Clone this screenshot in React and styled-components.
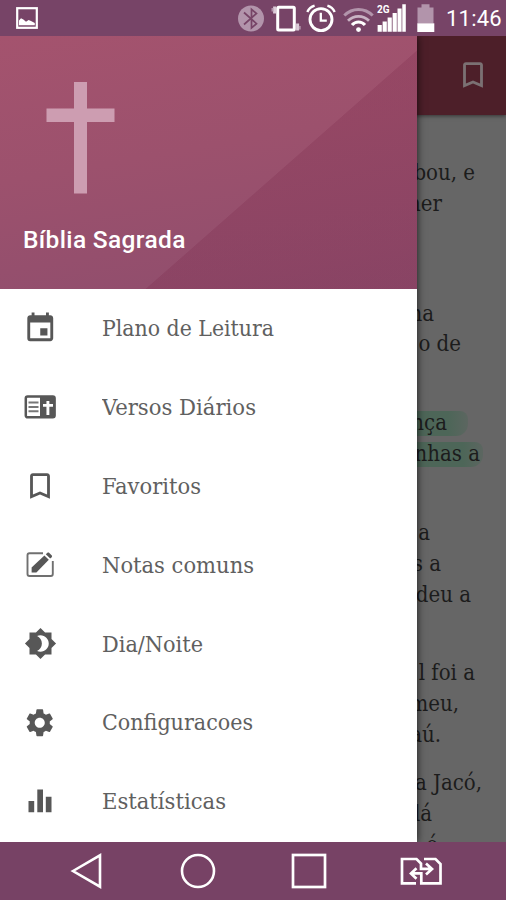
import React from 'react'
import styled, { createGlobalStyle } from 'styled-components'
import { MdBookmarkBorder, MdBrightness4, MdEvent, MdSettings } from 'react-icons/md'

const slab = `'Roboto Slab', 'DejaVu Serif Condensed', 'DejaVu Serif', serif`

const VersesIcon = () => (
  <svg width="34" height="34" viewBox="0 0 34 34">
    <rect x="2.8" y="6.5" width="28.8" height="20.8" rx="1.8" fill="none" stroke="#575757" strokeWidth="2.5" />
    <rect x="17" y="6" width="15" height="22" fill="#575757" />
    <path d="M5.5 12.5h10M5.5 17h10M5.5 21.2h10" stroke="#777" strokeWidth="1.9" />
    <path d="M24.9 11v14M20 15.4h10" stroke="#fff" strokeWidth="2.9" />
  </svg>
)

const NotesIcon = () => (
  <svg width="34" height="34" viewBox="0 0 34 34">
    <path d="M20 5.2H6.5a2 2 0 0 0-2 2V26a2 2 0 0 0 2 2h21.3a2 2 0 0 0 2-2V13" fill="none" stroke="#707070" strokeWidth="1.9" />
    <path d="M8.6 24.4v-4.8L21.4 7.4l4.4 4.4L13.4 24.4z" fill="#575757" />
    <path d="M22.8 6.2l1.4-1.3c.7-.6 1.5-.6 2.1 0l2.3 2.3c.6.7.6 1.4 0 2.1l-1.4 1.3z" fill="#575757" />
  </svg>
)

const StatsIcon = () => (
  <svg width="34" height="34" viewBox="0 0 34 34">
    <path d="M5.5 17h5.7v11.2H5.5zM14.3 5.5h5.7v22.7h-5.7zM22.8 12.7h5.7v15.5h-5.7z" fill="#575757" />
  </svg>
)

const menu = [
  { label: 'Plano de Leitura', icon: <MdEvent size={34.5} />, width: 172 },
  { label: 'Versos Diários', icon: <VersesIcon />, width: 154 },
  { label: 'Favoritos', icon: <MdBookmarkBorder size={34} />, width: 99 },
  { label: 'Notas comuns', icon: <NotesIcon />, width: 152 },
  { label: 'Dia/Noite', icon: <MdBrightness4 size={33} />, width: 101 },
  { label: 'Configuracoes', icon: <MdSettings size={33.5} />, width: 151 },
  { label: 'Estatísticas', icon: <StatsIcon />, width: 124 },
]

// every line is flushed to the right, "end" is the free room after it
const paragraphs = [
  [{ text: 'bou, e', end: 31 }, { text: 'her', end: 64 }, {}],
  [{}, { text: 'na', end: 72 }, { text: 'o de', end: 45 }],
  [{}, { text: 'nça', end: 59, mark: 38 }, { text: 'nhas a', end: 26, mark: 23 }],
  [{}, { text: 'a', end: 76 }, { text: 's a', end: 65 }, { text: 'deu a', end: 35 }],
  [{}, { text: 'l foi a', end: 31 }, { text: 'meu,', end: 47 }, { text: 'aú.', end: 65 }],
  [{ text: 'a Jacó,', end: 24 }, { text: 'lá', end: 74 }, { text: 'é', end: 68 }],
]

const StatusBar = () => (
  <Status>
    <svg width="24" height="36" viewBox="0 0 24 36">
      <rect x="2.2" y="8.2" width="19.6" height="19.6" fill="none" stroke="#fff" strokeWidth="2.2" />
      <path d="M4 25.2v-4.8l2-2.2 2.4 1.3 2.6 2.2 2.6-1.8 2.4 1 3.8 2v2.3z" fill="#fff" />
    </svg>
    <StatusIcons>
      <svg width="26" height="36" viewBox="0 0 26 36">
        <circle cx="13" cy="18.5" r="13" fill="#b294ab" />
        <path d="M6 12.5l12.5 11.2-5 4.3V9.3l5 4.2L6 24.5" fill="none" stroke="#774467" strokeWidth="1.7" />
      </svg>
      <svg width="30" height="36" viewBox="0 0 30 36">
        <rect x="6.7" y="7.2" width="16.6" height="22.8" rx="1" fill="none" stroke="#fff" strokeWidth="3" />
        <path d="M3.6 6.5v7M26.6 23.5v7" stroke="#dccbd8" strokeWidth="3" />
        <path d="M1.4 8v3.5M28.8 26v3.5" stroke="#b294ab" strokeWidth="1.8" />
      </svg>
      <svg width="30" height="36" viewBox="0 0 30 36">
        <circle cx="15" cy="19.6" r="11" fill="none" stroke="#fff" strokeWidth="2.9" />
        <path d="M1.3 12C2.8 8.8 5 6.8 8.6 5.7M28.7 12c-1.5-3.2-3.7-5.2-7.3-6.3" fill="none" stroke="#fff" strokeWidth="2.4" />
        <path d="M14.8 12.7v8h6" fill="none" stroke="#fff" strokeWidth="2.3" />
      </svg>
      <svg width="31" height="36" viewBox="0 0 31 36">
        <path d="M1.3 15.5c8-8 20.3-8 28.4 0" fill="none" stroke="#b294ab" strokeWidth="3" />
        <path d="M5 20.8c6-6 15-6 21 0" fill="none" stroke="#c9b3c4" strokeWidth="2.8" />
        <path d="M9 25c3.7-4 9.3-4 13 0" fill="none" stroke="#fff" strokeWidth="3.2" />
        <circle cx="15.5" cy="29.6" r="2.4" fill="#fff" />
      </svg>
      <Signal>
        <svg width="30" height="36" viewBox="0 0 30 36">
          <path d="M.6 25h4.2v6.8H.6zM5.6 21.5h4.2v10.3H5.6zM10.6 17.5h4.2v14.3h-4.2zM15.6 13h4.2v18.8h-4.2zM20.5 8.5h4.1v23.3h-4.1zM25.3 4.3h3.5v27.5h-3.5z" fill="#fff" />
        </svg>
        <Network>2G</Network>
      </Signal>
      <svg width="20" height="36" viewBox="0 0 20 36">
        <path d="M5.5 4.3h8v3.2h4v16h-16v-16h4z" fill="#b294ab" />
        <path d="M1.3 23.3h17V32h-17z" fill="#fff" />
      </svg>
    </StatusIcons>
    <Clock>11:46</Clock>
  </Status>
)

const Reader = () => (
  <Page>
    <AppBar>
      <MdBookmarkBorder size={34} />
    </AppBar>
    <Chapter>
      {paragraphs.map((lines, index) => (
        <Paragraph key={index}>
          {lines.map((line, i) => (
            <Line key={i} $end={line.end}>
              {line.mark && <Highlight $end={line.mark} />}
              <LineText>{line.text}</LineText>
            </Line>
          ))}
        </Paragraph>
      ))}
    </Chapter>
  </Page>
)

const NavBar = () => (
  <Nav>
    <svg width="34" height="38" viewBox="0 0 34 38">
      <path d="M3 19L30 3.3v31.4z" fill="none" stroke="#fff" strokeWidth="2.6" />
    </svg>
    <svg width="38" height="38" viewBox="0 0 38 38">
      <circle cx="19" cy="19" r="16" fill="none" stroke="#fff" strokeWidth="2.6" />
    </svg>
    <svg width="38" height="38" viewBox="0 0 38 38">
      <rect x="3" y="3" width="32" height="32" fill="none" stroke="#fff" strokeWidth="2.7" />
    </svg>
    <svg width="44" height="38" viewBox="0 0 44 38">
      <path d="M17 31.3H3V7h14.5l4.5 4.5v5.4h10M27 11.5l6 5.4-6 5.5" fill="none" stroke="#fff" strokeWidth="2.7" />
      <path d="M25 7h11.5l5 5v19.3H22.3V21.4H13M17.5 16.3L12 21.4l5.5 5.3" fill="none" stroke="#fff" strokeWidth="2.7" />
    </svg>
  </Nav>
)

const App = () => {
  return (
    <Screen>
      <GlobalStyle />
      <StatusBar />
      <Body>
        <Reader />
        <Drawer>
          <DrawerHeader>
            <svg width="70" height="113" viewBox="0 0 70 113">
              <path d="M28 0h13v26.5h27.5V40H41v71.5H28V40H.5V26.5H28z" fill="#cd9db1" />
            </svg>
            <Title>Bíblia Sagrada</Title>
          </DrawerHeader>
          {menu.map(item => (
            <MenuItem key={item.label}>
              <IconBox>{item.icon}</IconBox>
              <svg width={item.width + 4} height="32">
                <Label x="0" y="23.5" textLength={item.width} lengthAdjust="spacingAndGlyphs">{item.label}</Label>
              </svg>
            </MenuItem>
          ))}
        </Drawer>
      </Body>
      <NavBar />
    </Screen>
  )
}

const GlobalStyle = createGlobalStyle`
body {
  margin: 0;
}

* {
  box-sizing: border-box;
}

svg {
  display: block;
  flex-shrink: 0;
}
`

const Screen = styled.div`
width: 506px;
height: 900px;
display: flex;
flex-direction: column;
overflow: hidden;
font-family: Roboto, sans-serif;
`

const Status = styled.div`
height: 36px;
flex-shrink: 0;
display: flex;
align-items: center;
padding: 0 4px 0 15px;
background: #774467;
`

const StatusIcons = styled.div`
display: flex;
margin-left: auto;

svg:nth-child(2) {
  margin-left: 7px;
}

svg:nth-child(3) {
  margin-left: 5px;
}

svg:nth-child(4) {
  margin-left: 7px;
}

svg:nth-child(6) {
  margin-left: 9px;
}
`

const Signal = styled.div`
position: relative;
margin-left: 3px;
`

const Network = styled.span`
position: absolute;
left: 0;
top: 4px;
color: #fff;
font-size: 10px;
line-height: 11px;
font-weight: bold;
`

const Clock = styled.span`
width: 56px;
margin-left: 10px;
color: #fff;
font-size: 22px;
line-height: 36px;
padding-top: 2px;
letter-spacing: 0.2px;
white-space: nowrap;
`

const Body = styled.div`
position: relative;
height: 805.5px;
flex-shrink: 0;
overflow: hidden;
background: #666;
`

const Page = styled.div`
display: flex;
flex-direction: column;
`

const AppBar = styled.div`
height: 78.5px;
display: flex;
align-items: center;
justify-content: flex-end;
padding-right: 16px;
color: #7b7173;
background: #4d1f29;
box-shadow: 0 1px 4px rgba(0, 0, 0, 0.5);
`

const Chapter = styled.div`
display: flex;
flex-direction: column;
gap: 17px;
padding-top: 43.5px;
`

const Paragraph = styled.div`
display: flex;
flex-direction: column;
`

const Line = styled.div`
position: relative;
height: 30.9px;
display: flex;
justify-content: flex-end;
padding-right: ${({ $end }) => $end || 0}px;
`

const LineText = styled.span`
position: relative;
font-family: ${slab};
font-stretch: condensed;
font-size: 22px;
line-height: 30.9px;
color: #1c1c1c;
white-space: pre;
`

const Highlight = styled.span`
position: absolute;
top: 3px;
right: ${({ $end }) => $end}px;
width: 90px;
height: 25px;
border-radius: 0 8px 12px 0;
background: linear-gradient(to left, rgba(77, 102, 88, 0.4), #4d6658 20px);
`

const Drawer = styled.div`
position: absolute;
top: 0;
left: 0;
width: 417px;
height: 100%;
background: #fff;
box-shadow: 0 0 8px rgba(0, 0, 0, 0.75);
`

const DrawerHeader = styled.div`
height: 253px;
display: flex;
flex-direction: column;
padding: 45.5px 0 0 46px;
background:
  linear-gradient(to bottom right, transparent 50%, rgba(115, 30, 65, 0.2) 50.2%) right bottom / 272px 239px no-repeat,
  linear-gradient(170deg, #a4536e 0%, #9c516d 45%, #8e4d6d 100%);
`

const Title = styled.div`
margin: 30px 0 0 -23px;
color: #fff;
font-size: 24.5px;
line-height: 30px;
font-weight: 500;
letter-spacing: 0.35px;
`

const MenuItem = styled.div`
height: 78.8px;
display: flex;
align-items: center;
padding-left: 23px;
color: #575757;
`

const IconBox = styled.div`
width: 34px;
margin-right: 45px;
display: flex;
justify-content: center;
`

const Label = styled.text`
font-family: ${slab};
font-stretch: condensed;
font-size: 22px;
fill: #606060;
`

const Nav = styled.div`
height: 58.5px;
flex-shrink: 0;
display: flex;
align-items: center;
gap: 73.5px;
padding-left: 70px;
background: #774265;

svg:nth-child(2) {
  margin-left: 1px;
}

svg:nth-child(4) {
  margin-left: -3px;
}
`

export default App
